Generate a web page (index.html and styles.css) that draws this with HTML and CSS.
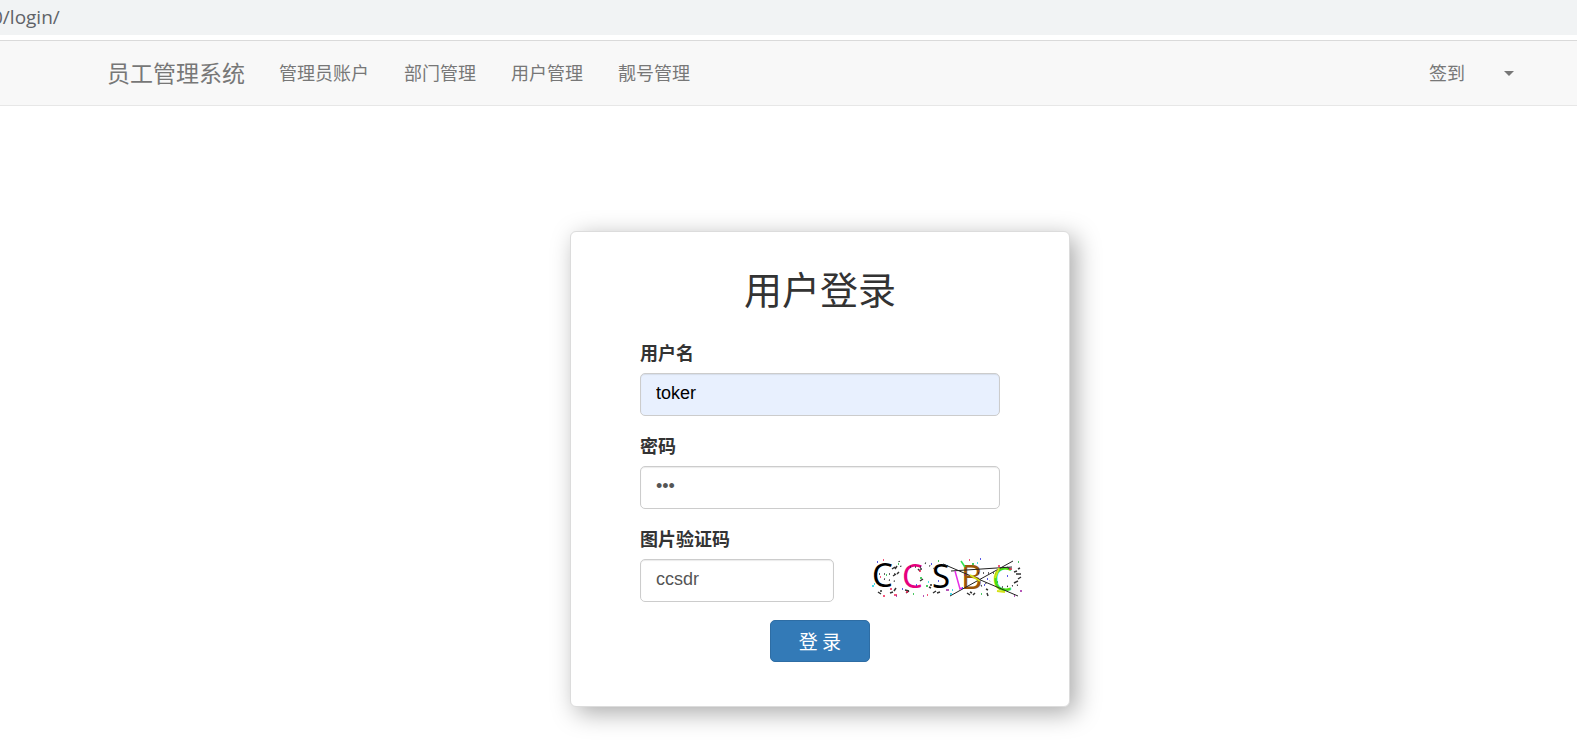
FILE: index.html
```html
<!DOCTYPE html>
<html lang="zh-CN">
<head>
<meta charset="utf-8">
<title>用户登录</title>
<link rel="stylesheet" href="styles.css">
</head>
<body>
<div class="address"><span class="address-text">0/login/</span></div>
<nav class="navbar">
  <a class="brand" href="#">员工管理系统</a>
  <div class="nav-links">
    <a href="#">管理员账户</a>
    <a href="#">部门管理</a>
    <a href="#">用户管理</a>
    <a href="#">靓号管理</a>
  </div>
  <div class="nav-right">
    <a href="#">签到</a>
    <button class="menu" type="button" aria-label="账户菜单"><span class="caret"></span></button>
  </div>
</nav>
<main class="page">
  <form class="card">
    <h1>用户登录</h1>
    <div class="field">
      <label for="username">用户名</label>
      <input class="autofilled" id="username" type="text" value="toker">
    </div>
    <div class="field">
      <label for="password">密码</label>
      <input id="password" type="password" value="123">
    </div>
    <div class="field">
      <label for="code">图片验证码</label>
      <div class="code-row">
        <input id="code" type="text" value="ccsdr">
        <svg class="captcha" viewBox="0 0 150 38" role="img" aria-label="验证码">
          <g class="captcha-letters">
            <text x="0" y="28" fill="#000">C</text>
            <text x="30" y="29" fill="#e6007e">C</text>
            <text x="60" y="29" fill="#000">S</text>
            <text x="89" y="30" fill="#9a5608">B</text>
            <text x="120" y="32" fill="#4be010">C</text>
          </g>
          <g fill="none" stroke-width="1">
            <path stroke="#222" d="M71 5L146 37M78 37L141 2M79 12L140 8"/>
            <path stroke="#e62ee6" stroke-width="1.5" d="M83 12L88 30L90 29"/>
            <path stroke="#2fe050" stroke-width="1.5" d="M89 2l4 6"/>
            <path stroke="#d5e21a" stroke-width="2" d="M98 16l10 6M127 9l-4 10M125 32l8 1"/>
          </g>
          <g fill="none" stroke-width="1.5">
            <path stroke="#333" d="M20 10l3-2m0 2l2-3M21 17l3-2m1 0l2-2M6 33l3 2m-1-3l2 0M18 34l3-1m1-1l2-3M33 31l4 1m-3 2l3-2M46 10l2 2m0-2l2 0M48 22l3-2M57 28l2 1m-1-3l2 0M61 34l3-2m1 2l3-1M95 34l3 2m0-3l2 1m1 2l2-2M114 30l2 1m-1 3l1 3M142 13l3-1m1-2l2-1M142 24l4-2m0-2l3-2M135 8l3 2m6 5h5"/>
            <path stroke="#333" stroke-dasharray="1 4" d="M7 15h18M27 2l3 9M38 8h14M53 4l10 6M106 14h16M109 27l9-5M130 28l17-2M12 20l14 3"/>
          </g>
          <g fill="none" stroke-width="1.5">
            <path stroke="#f02050" d="M11 1h1M8 18h1M18 30h2M22 36h3M11 37h2M34 33h2M47 12h2M55 36h1M97 1h1M126 7h2M137 10h3"/>
            <path stroke="#10b830" d="M26 5h1M14 16h1M48 19h2M54 27h2M41 35h1M66 2h1M100 5h2M109 35h1M146 3h1M125 23h1"/>
            <path stroke="#2020e0" d="M5 3h1M30 30h1M44 26h1M59 5h1M66 22h1M90 29h1M108 0h1M112 26h1M135 17h1M115 20h1"/>
            <path stroke="#10cde0" d="M0 27h2M2 25h1M78 35h2M56 23h1M105 4h1M80 31h1"/>
            <path stroke="#9d20a0" d="M51 37h1M74 31h3M92 16h1M142 37h1M148 32h2M24 37h1"/>
          </g>
        </svg>
      </div>
    </div>
    <button class="submit" type="submit">登 录</button>
  </form>
</main>
</body>
</html>
```
FILE: styles.css
```css
* {
  box-sizing: border-box;
}

body {
  margin: 0;
  background: #fff;
  color: #333;
  font-family: "Liberation Sans", "Noto Sans CJK SC", sans-serif;
  font-size: 18px;
  line-height: 26px;
}

a {
  color: #777;
  text-decoration: none;
}

.address {
  height: 35px;
  overflow: hidden;
  display: flex;
  align-items: center;
  padding-bottom: 1px;
  background: #f1f3f4;
  color: #5f6368;
  font-family: "Open Sans", sans-serif;
  font-size: 19px;
}

.address-text {
  margin-left: -8px;
}

.navbar {
  display: flex;
  align-items: center;
  height: 66px;
  margin-top: 5px;
  padding: 0 63px 2px 107px;
  background: #f8f8f8;
  border-top: 1px solid #dadada;
  border-bottom: 1px solid #e7e7e7;
  font-family: "Noto Sans CJK SC", sans-serif;
}

.brand {
  font-size: 23px;
}

.nav-links {
  display: flex;
  gap: 35px;
  margin-left: 34px;
}

.nav-right {
  display: flex;
  align-items: center;
  gap: 39px;
  margin-left: auto;
}

.menu {
  display: flex;
  padding: 2px 0 0;
  border: 0;
  background: none;
}

.caret {
  border-top: 5px solid #777;
  border-left: 5px solid transparent;
  border-right: 5px solid transparent;
}

.page {
  padding: 125px 0 36px 63px;
}

.card {
  width: 500px;
  margin: 0 auto;
  padding: 30px 69px 44px;
  border: 1px solid #dcdcdc;
  border-radius: 6px;
  background: #fff;
  box-shadow: 6px 6px 25px #aaa;
}

h1 {
  margin: 0 0 21px;
  font-size: 38px;
  font-weight: 400;
  line-height: 58px;
  text-align: center;
}

.field {
  margin-bottom: 18px;
}

label {
  display: block;
  margin-bottom: 6px;
  font-weight: 700;
}

input {
  display: block;
  width: 100%;
  height: 43px;
  padding: 0 15px 2px;
  border: 1px solid #ccc;
  border-radius: 5px;
  background: #fff;
  box-shadow: inset 0 1px 1px rgba(0, 0, 0, 0.08);
  color: #555;
  font-family: inherit;
  font-size: 18px;
}

.autofilled {
  background: #e8f0fe;
  color: #000;
}

.code-row {
  display: grid;
  grid-template-columns: 194px 150px;
  column-gap: 38px;
}

.captcha {
  width: 150px;
  height: 38px;
  overflow: visible;
}

.captcha-letters {
  font-family: "Noto Sans", sans-serif;
  font-size: 33px;
}

.submit {
  display: block;
  width: 100px;
  height: 42px;
  margin: 0 auto;
  padding: 0 0 2px;
  border: 1px solid #2e6da4;
  border-radius: 5px;
  background: #337ab7;
  color: #fff;
  font-family: "Noto Sans CJK SC", sans-serif;
  font-size: 19px;
}
```
